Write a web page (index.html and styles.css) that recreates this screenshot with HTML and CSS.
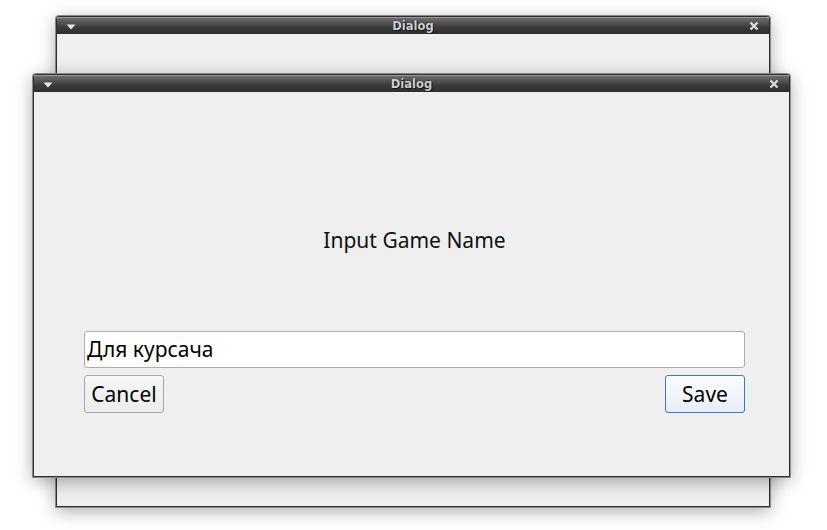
FILE: index.html
```html
<!DOCTYPE html>
<html>
<head>
<meta charset="utf-8">
<link rel="stylesheet" href="styles.css">
</head>
<body>
<div class="desktop">
  <div class="window back">
    <div class="titlebar">
      <svg class="menu-icon" width="10" height="6" viewBox="0 0 10 6"><path d="M0.5 0.5 H9.5 L5 5.5 Z" fill="#e8e8e8"/></svg>
      <span class="title">Dialog</span>
      <svg class="close-icon" width="10" height="10" viewBox="0 0 10 10"><path d="M1.5 1.5 L8.5 8.5 M8.5 1.5 L1.5 8.5" stroke="#dcdcdc" stroke-width="2.4"/></svg>
    </div>
    <div class="body"></div>
  </div>
  <div class="window front">
    <div class="titlebar">
      <svg class="menu-icon" width="10" height="6" viewBox="0 0 10 6"><path d="M0.5 0.5 H9.5 L5 5.5 Z" fill="#e8e8e8"/></svg>
      <span class="title">Dialog</span>
      <svg class="close-icon" width="10" height="10" viewBox="0 0 10 10"><path d="M1.5 1.5 L8.5 8.5 M8.5 1.5 L1.5 8.5" stroke="#dcdcdc" stroke-width="2.4"/></svg>
    </div>
    <div class="body content">
      <div class="label">Input Game Name</div>
      <div class="field">Для курсача</div>
      <div class="buttons">
        <button class="btn">Cancel</button>
        <button class="btn primary">Save</button>
      </div>
    </div>
  </div>
</div>
</body>
</html>
```
FILE: styles.css
```css
html, body {
  margin: 0;
  padding: 0;
  background: #ffffff;
}
body {
  font-family: "Noto Sans", "Open Sans", sans-serif;
}
.desktop {
  position: relative;
  width: 827px;
  height: 530px;
  overflow: hidden;
}
.window {
  position: absolute;
  box-sizing: border-box;
  display: flex;
  flex-direction: column;
  background: #efefef;
  border: 1px solid #2f2f2f;
  border-radius: 3px 3px 0 0;
  box-shadow: 0 0 0 1px #8a8a8a, 0 4px 18px rgba(0, 0, 0, 0.35);
}
.back {
  left: 56px;
  top: 16px;
  width: 714px;
  height: 491px;
}
.front {
  left: 33px;
  top: 74px;
  width: 757px;
  height: 403px;
}
.titlebar {
  height: 16px;
  flex: none;
  display: flex;
  align-items: center;
  justify-content: center;
  position: relative;
  background: linear-gradient(#6c6c6c, #3a3a3a 60%, #2e2e2e);
  border-top: 1px solid #9a9a9a;
  border-radius: 2px 2px 0 0;
}
.title {
  font-family: "DejaVu Sans", sans-serif;
  font-weight: bold;
  font-size: 11.5px;
  color: #cfcfcf;
  text-shadow: 1px 1px 0 #1a1a1a, 0 0 1px #000;
}
.menu-icon {
  position: absolute;
  left: 9px;
  top: 6px;
}
.close-icon {
  position: absolute;
  right: 10px;
  top: 3px;
}
.body {
  flex: 1;
}
.content {
  display: flex;
  flex-direction: column;
  padding: 0 44px 0 50px;
}
.label {
  margin-top: 134px;
  text-align: center;
  font-size: 21px;
  line-height: 28px;
  color: #111;
}
.field {
  margin-top: 77px;
  height: 37px;
  box-sizing: border-box;
  background: #fff;
  border: 1px solid #adadad;
  border-radius: 3px;
  font-size: 21px;
  line-height: 35px;
  padding-left: 2px;
  color: #000;
}
.buttons {
  margin-top: 7px;
  display: flex;
  justify-content: space-between;
}
.btn {
  width: 80px;
  height: 38px;
  box-sizing: border-box;
  font-family: "Noto Sans", "Open Sans", sans-serif;
  font-size: 21px;
  color: #000;
  padding: 0;
  background: linear-gradient(#f6f6f6, #ececec);
  border: 1px solid #a8a8a8;
  border-radius: 3px;
}
.primary {
  border-color: #3d7ab8;
  background: linear-gradient(#fbfcfd, #e6eef6);
}
```
